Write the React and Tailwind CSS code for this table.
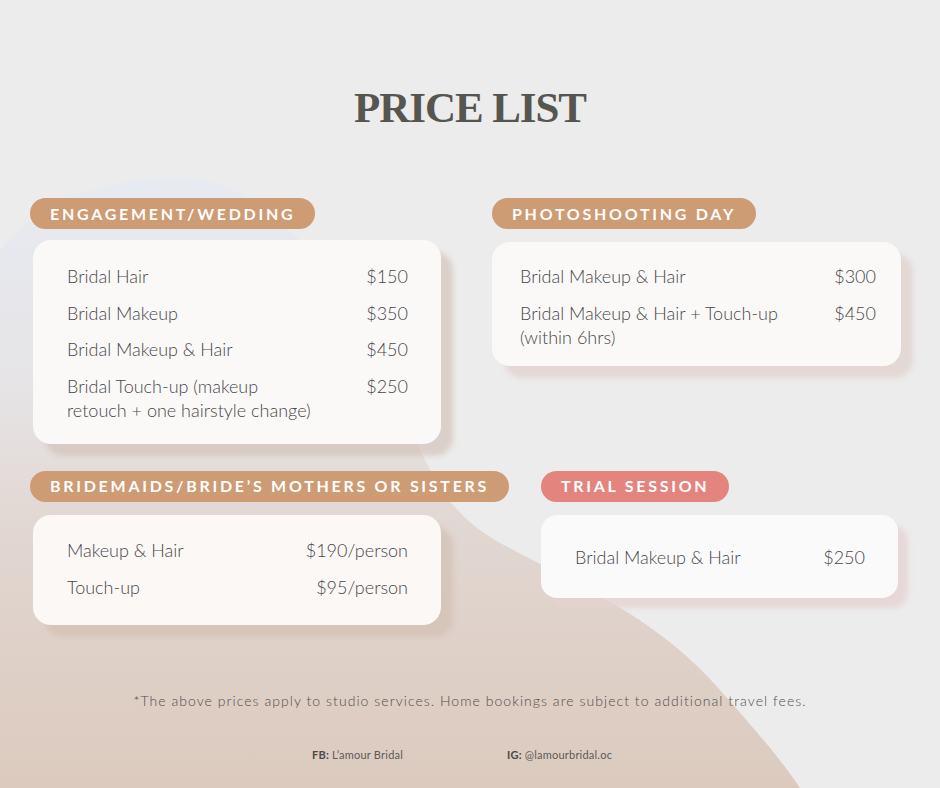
const body = { fontFamily: 'Lato, "Open Sans", sans-serif' };

const Pill = ({ children, color = 'bg-[#cd9b74]' }) => (
    <div className={`inline-flex h-[31px] items-center rounded-full px-[20px] ${color}`}>
        <span className="text-[16px] font-bold uppercase leading-none tracking-[0.17em] text-white" style={body}>
            {children}
        </span>
    </div>
);

const Row = ({ label, price }) => (
    <div className="flex items-start justify-between gap-4 text-[18px] font-light leading-[24px] text-[#48474b]">
        <span>{label}</span>
        <span className="whitespace-nowrap">{price}</span>
    </div>
);

export default function App() {
    return (
        <div className="relative h-[788px] w-[940px] overflow-hidden bg-[#ececec]" style={body}>
            <svg className="absolute inset-0" width="940" height="788" viewBox="0 0 940 788">
                <defs>
                    <linearGradient id="blob" x1="0" y1="170" x2="0" y2="788" gradientUnits="userSpaceOnUse">
                        <stop offset="0" stopColor="#e7ebf2" />
                        <stop offset="0.35" stopColor="#e6e4e6" />
                        <stop offset="0.6" stopColor="#e1d6d0" />
                        <stop offset="1" stopColor="#dccabe" />
                    </linearGradient>
                </defs>
                <path
                    d="M0,250 C40,200 110,176 180,177 C280,180 360,300 417,443 C440,495 460,520 500,543 C580,585 660,620 720,690 C760,735 785,765 800,788 L0,788 Z"
                    fill="url(#blob)"
                />
            </svg>

            <div className="relative flex flex-col">
                <h1
                    className="pt-[84px] text-center text-[43px] font-bold leading-[48px] tracking-[-0.025em] text-[#56554f]"
                    style={{ fontFamily: '"Liberation Serif", serif' }}
                >
                    PRICE LIST
                </h1>

                <div className="mt-[66px] flex items-start">
                    <div className="w-[492px] pl-[30px]">
                        <Pill>Engagement/Wedding</Pill>
                        <div className="ml-[3px] mt-[11px] w-[408px] rounded-[18px] bg-[#faf9f8] pb-[22px] pl-[34px] pr-[33px] pt-[24px] shadow-[12px_12px_5px_rgba(208,190,178,0.6)]">
                            <div className="flex flex-col gap-[12.5px]">
                                <Row label="Bridal Hair" price="$150" />
                                <Row label="Bridal Makeup" price="$350" />
                                <Row label="Bridal Makeup & Hair" price="$450" />
                                <Row label={<>Bridal Touch-up (makeup<br />retouch + one hairstyle change)</>} price="$250" />
                            </div>
                        </div>
                    </div>
                    <div className="w-[409px]">
                        <Pill>Photoshooting Day</Pill>
                        <div className="mt-[13px] w-[409px] rounded-[18px] bg-[#faf9f8] pb-[17px] pl-[28px] pr-[25px] pt-[22px] shadow-[12px_12px_5px_rgba(222,206,200,0.65)]">
                            <div className="flex flex-col gap-[13px]">
                                <Row label="Bridal Makeup & Hair" price="$300" />
                                <Row label={<>Bridal Makeup & Hair + Touch-up<br />(within 6hrs)</>} price="$450" />
                            </div>
                        </div>
                    </div>
                </div>

                <div className="mt-[27px] flex items-start">
                    <div className="w-[541px] pl-[30px]">
                        <Pill>Bridemaids/Bride’s Mothers or Sisters</Pill>
                        <div className="ml-[3px] mt-[13px] w-[408px] rounded-[18px] bg-[#fbf8f6] pb-[26px] pl-[34px] pr-[33px] pt-[23px] shadow-[12px_12px_5px_rgba(208,188,174,0.6)]">
                            <div className="flex flex-col gap-[13px]">
                                <Row label="Makeup & Hair" price="$190/person" />
                                <Row label="Touch-up" price="$95/person" />
                            </div>
                        </div>
                    </div>
                    <div className="w-[357px]">
                        <Pill color="bg-[#e4847f]">Trial Session</Pill>
                        <div className="mt-[13px] w-[357px] rounded-[16px] bg-[#fbfafa] pb-[29px] pl-[34px] pr-[33px] pt-[30px] shadow-[10px_10px_5px_rgba(230,210,210,0.75)]">
                            <Row label="Bridal Makeup & Hair" price="$250" />
                        </div>
                    </div>
                </div>

                <p className="mt-[66px] text-center text-[14px] font-light leading-[20px] tracking-[0.075em] text-[#4f4d4b]">
                    *The above prices apply to studio services. Home bookings are subject to additional travel fees.
                </p>

                <div className="mt-[37px] flex pl-[312px] text-[11px] leading-[14px] tracking-[0.02em] text-[#5e5a57]">
                    <span className="w-[195px]"><b className="font-bold text-[#4e4a47]">FB:</b> L’amour Bridal</span>
                    <span><b className="font-bold text-[#4e4a47]">IG:</b> @lamourbridal.oc</span>
                </div>
            </div>
        </div>
    );
}
